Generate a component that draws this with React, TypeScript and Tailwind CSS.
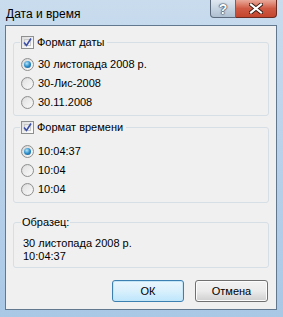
import React from "react";

const font = { fontFamily: '"Liberation Sans", Arial, sans-serif' };

function Check() {
  return (
    <span className="relative inline-flex h-[13px] w-[13px] shrink-0 items-center justify-center border border-[#8e8f8f] bg-gradient-to-br from-[#dcdcdc] to-[#ffffff]">
      <span className="absolute inset-[2px] border border-[#c8c8c8] bg-gradient-to-br from-[#e6e6e6] to-[#fafafa]" />
      <svg viewBox="0 0 9 9" className="relative h-[9px] w-[9px]">
        <path d="M1 4.5 L3.5 7.5 L8 0.5" fill="none" stroke="#3b4fa8" strokeWidth="1.6" />
      </svg>
    </span>
  );
}

function Radio({ on }: { on?: boolean }) {
  return (
    <span className="inline-flex h-[13px] w-[13px] shrink-0 items-center justify-center rounded-full border border-[#8e8f8f] bg-gradient-to-br from-[#d6d6d6] to-[#fbfbfb]">
      {on ? (
        <span className="h-[7px] w-[7px] rounded-full bg-[radial-gradient(circle_at_40%_35%,#b6e6fb_0%,#2c8dc9_50%,#0d4f82_100%)]" />
      ) : (
        <span className="h-[9px] w-[9px] rounded-full bg-gradient-to-br from-[#e2e2e2] to-[#f8f8f8]" />
      )}
    </span>
  );
}

function Row({ on, label }: { on?: boolean; label: string }) {
  return (
    <div className="flex h-[19px] items-center gap-[4px] pl-[7px]">
      <Radio on={on} />
      <span>{label}</span>
    </div>
  );
}

export default function App() {
  return (
    <div
      style={font}
      className="relative flex h-[317px] w-[283px] flex-col overflow-hidden bg-gradient-to-b from-[#c9dcee] via-[#b9d1ea] to-[#a9c8e6] text-[11px] text-black"
    >
      {/* title bar */}
      <div className="relative flex h-[25px] items-start">
        <span className="pl-[6px] pt-[6px] text-[12px] leading-[16px] text-black">Дата и время</span>
        <div className="absolute right-[6px] top-0 flex h-[18px]">
          <div className="flex w-[26px] items-center justify-center rounded-bl-[4px] border border-t-0 border-[#5b6b7d] bg-gradient-to-b from-[#dfe8f1] via-[#c6d4e2] to-[#aebfd1]">
            <span
              className="text-[14px] font-bold leading-none text-white"
              style={{ textShadow: "0 0 1px #2b3a4a, 0 0 1px #2b3a4a, 0 0 2px #2b3a4a" }}
            >
              ?
            </span>
          </div>
          <div className="flex w-[41px] items-center justify-center rounded-br-[4px] border border-l-0 border-t-0 border-[#6a2a20] bg-gradient-to-b from-[#e9a99a] via-[#cf5a44] to-[#c4452e]">
            <svg viewBox="0 0 14 11" className="h-[11px] w-[14px]">
              <path d="M2 1.5 L12 9.5 M12 1.5 L2 9.5" stroke="#3a1a12" strokeWidth="4" strokeLinecap="square" />
              <path d="M2 1.5 L12 9.5 M12 1.5 L2 9.5" stroke="#ffffff" strokeWidth="2.2" strokeLinecap="square" />
            </svg>
          </div>
        </div>
      </div>

      {/* client area */}
      <div className="ml-[5px] mr-[6px] flex h-[285px] flex-col border border-[#62788f] bg-[#f0f0f0] px-[7px]">
        {/* group 1 */}
        <div className="relative mt-[16px] h-[74px] rounded-[3px] border border-[#d5dfe5] pt-[12px]">
          <div className="absolute -top-[7px] left-[6px] flex items-center gap-[3px] bg-[#f0f0f0] pl-[1px] pr-[3px] leading-[13px]">
            <Check />
            <span>Формат даты</span>
          </div>
          <Row on label="30 листопада 2008 р." />
          <Row label="30-Лис-2008" />
          <Row label="30.11.2008" />
        </div>

        {/* group 2 */}
        <div className="relative mt-[11px] h-[76px] rounded-[3px] border border-[#d5dfe5] pt-[14px]">
          <div className="absolute -top-[7px] left-[6px] flex items-center gap-[3px] bg-[#f0f0f0] pl-[1px] pr-[3px] leading-[13px]">
            <Check />
            <span>Формат времени</span>
          </div>
          <Row on label="10:04:37" />
          <Row label="10:04" />
          <Row label="10:04" />
        </div>

        {/* group 3 */}
        <div className="relative mt-[19px] h-[46px] rounded-[3px] border border-[#d5dfe5] pl-[9px] pt-[14px] leading-[12px]">
          <div className="absolute -top-[7px] left-[7px] bg-[#f0f0f0] px-[1px] leading-[13px]">Образец:</div>
          <div className="leading-[13px]">30 листопада 2008 р.</div>
          <div className="leading-[12px]">10:04:37</div>
        </div>

        {/* buttons */}
        <div className="mt-[12px] flex justify-end gap-[11px] pr-[1px]">
          <button className="h-[22px] w-[72px] rounded-[3px] border border-[#3c7fb1] bg-gradient-to-b from-[#eaf6fd] via-[#d9f0fc] to-[#bee6fd] text-[11px] shadow-[inset_0_0_0_1px_#c4e5f6]">
            ОК
          </button>
          <button className="h-[22px] w-[73px] rounded-[3px] border border-[#707070] bg-gradient-to-b from-[#f2f2f2] via-[#ebebeb] to-[#cfcfcf] text-[11px] shadow-[inset_0_0_0_1px_#fcfcfc]">
            Отмена
          </button>
        </div>
      </div>
    </div>
  );
}
